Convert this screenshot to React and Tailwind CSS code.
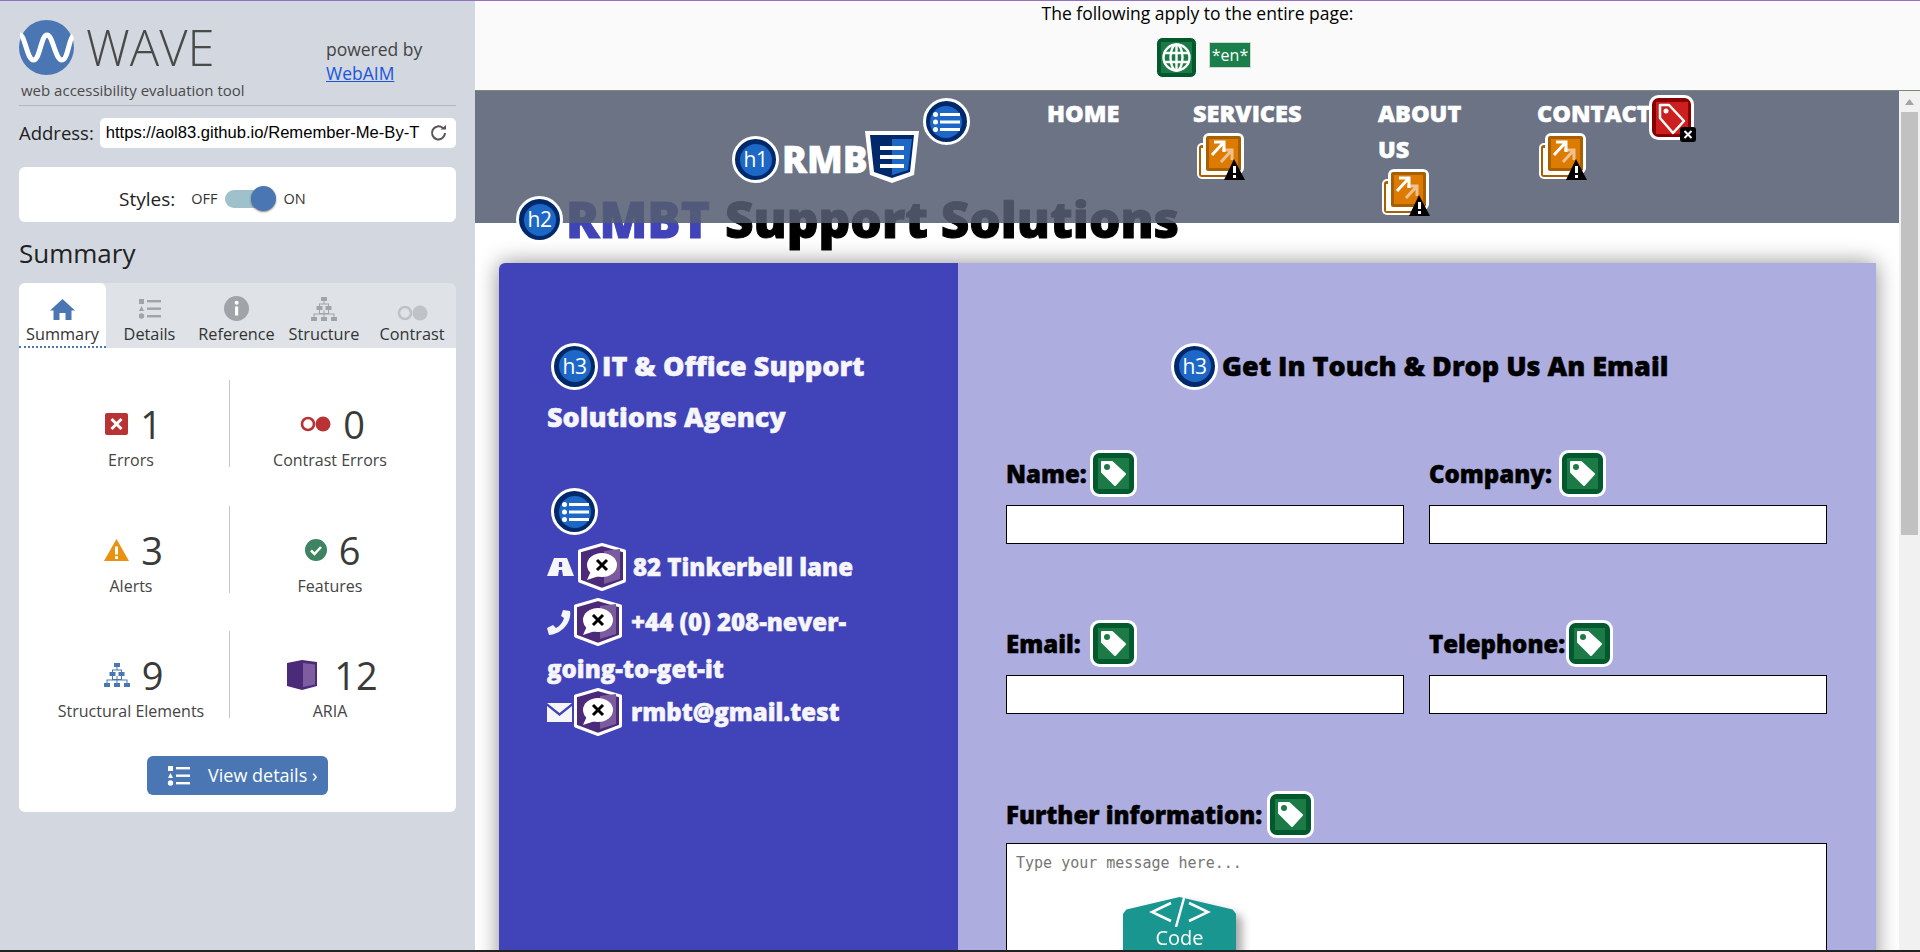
import React from "react";

const display = "font-['Open_Sans'] font-extrabold [-webkit-text-stroke:0.5px]";

const RoundIcon = ({ label }) => (
  <span className="relative z-20 flex h-[47px] w-[47px] shrink-0 items-center justify-center rounded-full border-[3px] border-white bg-[#00296b] [-webkit-text-stroke:0]">
    <span className="flex h-[32px] w-[32px] items-center justify-center rounded-full bg-[#1d68c6] font-['Open_Sans'] text-[21px] font-normal leading-none tracking-[-0.5px] text-white">
      {label || (
        <svg width="28" height="22" viewBox="0 0 28 22" fill="white">
          <circle cx="3.5" cy="3.5" r="2.5" />
          <circle cx="3.5" cy="11" r="2.5" />
          <circle cx="3.5" cy="18.5" r="2.5" />
          <rect x="8" y="2" width="20" height="3" />
          <rect x="8" y="9.5" width="20" height="3" />
          <rect x="8" y="17" width="20" height="3" />
        </svg>
      )}
    </span>
  </span>
);

const TagIcon = () => (
  <svg width="47" height="47" viewBox="0 0 47 47" className="shrink-0">
    <rect x="1.5" y="1.5" width="44" height="44" rx="8" fill="#03592e" stroke="white" strokeWidth="3" />
    <rect x="8" y="8" width="31" height="31" fill="#1c7a47" />
    <path d="M12 12H22L35 24L25 35L12 22Z" fill="white" stroke="white" strokeWidth="2" strokeLinejoin="round" />
    <circle cx="17" cy="17" r="3" fill="#1c7a47" />
  </svg>
);

const BrokenLabel = () => (
  <svg width="47" height="47" viewBox="0 0 47 47" className="shrink-0">
    <rect x="1.5" y="1.5" width="42" height="42" rx="8" fill="#8a0000" stroke="white" strokeWidth="3" />
    <rect x="7" y="7" width="32" height="32" fill="#cc2020" />
    <path d="M11 10H20L35 26L24 38L11 23Z" fill="none" stroke="white" strokeWidth="2.5" strokeLinejoin="round" />
    <circle cx="17" cy="16" r="2.5" fill="white" />
    <rect x="31" y="32" width="16" height="15" rx="3" fill="black" />
    <path d="M35.5 36L42.5 43M42.5 36L35.5 43" stroke="white" strokeWidth="2" />
  </svg>
);

const ExternalIcon = () => (
  <svg width="49" height="49" viewBox="0 0 49 49" className="shrink-0">
    <rect x="1" y="11" width="38" height="36" rx="5" fill="white" />
    <rect x="3" y="13" width="34" height="32" rx="3" fill="#a85f00" />
    <rect x="5" y="16" width="30" height="27" fill="white" />
    <rect x="7" y="1" width="41" height="41" rx="6" fill="white" />
    <rect x="10" y="4" width="35" height="35" rx="2" fill="#a85f00" />
    <rect x="13" y="7" width="29" height="29" fill="#dd7a00" />
    <path d="M26 18L36 18L36 28M36 18L25 30" fill="none" stroke="#f0c090" strokeWidth="3" />
    <path d="M18 10L28 10L28 20M28 10L16 23" fill="none" stroke="white" strokeWidth="3" />
    <path d="M38 27L49 48H28Z" fill="black" />
    <rect x="37" y="34" width="3" height="7" fill="white" />
    <rect x="37" y="43" width="3" height="3" fill="white" />
  </svg>
);

const AriaIcon = () => (
  <svg width="48" height="48" viewBox="0 0 48 48" className="shrink-0">
    <path d="M24 1.5L46.5 8V38L24 46.5L1.5 38V8Z" fill="#4b2a7a" stroke="white" strokeWidth="3" strokeLinejoin="round" />
    <path d="M26 8L42 6V36L26 41Z" fill="#7a5c9e" />
    <ellipse cx="24" cy="22" rx="15" ry="12" fill="white" />
    <path d="M13 28L9 37L21 33Z" fill="white" />
    <path d="M19 17L29 27M29 17L19 27" stroke="black" strokeWidth="3" />
  </svg>
);

const GlobeIcon = () => (
  <svg width="41" height="41" viewBox="0 0 41 41">
    <rect x="0.5" y="0.5" width="40" height="40" rx="6" fill="#03592e" stroke="white" />
    <rect x="5" y="5" width="31" height="31" fill="#1c7a47" />
    <g fill="none" stroke="white" strokeWidth="2.4">
      <circle cx="20.5" cy="20.5" r="13" />
      <ellipse cx="20.5" cy="20.5" rx="6" ry="13" />
      <path d="M20.5 7V34M8 16H33M8 25H33" />
    </g>
  </svg>
);

const ListGlyph = ({ color, size = 24 }) => (
  <svg width={size} height={size} viewBox="0 0 24 24" fill={color}>
    <rect x="1" y="2" width="5" height="5" />
    <path d="M3.5 9L6 14H1Z" />
    <circle cx="3.5" cy="19" r="2.7" />
    <rect x="9" y="3" width="14" height="2.4" />
    <rect x="9" y="10.5" width="14" height="2.4" />
    <rect x="9" y="18" width="14" height="2.4" />
  </svg>
);

const TreeGlyph = ({ color, w = 26, h = 24 }) => (
  <svg width={w} height={h} viewBox="0 0 26 24" fill={color}>
    <rect x="10" y="0" width="6" height="4" />
    <rect x="5.5" y="9" width="6" height="4" />
    <rect x="14.5" y="9" width="6" height="4" />
    <rect x="0" y="20" width="6" height="4" />
    <rect x="10" y="20" width="6" height="4" />
    <rect x="20" y="20" width="6" height="4" />
    <path d="M12.5 4H13.5V6.5H18V9H17V7.5H9V9H8V6.5H12.5ZM8 13H9V16H12.5V13H13.5V16H17V13H18V16.5H23.5V20H22.5V17.5H13.5V20H12.5V17.5H3.5V20H2.5V16.5H8Z" />
  </svg>
);

const PairGlyph = ({ color }) => (
  <svg width="31" height="16" viewBox="0 0 31 16">
    <circle cx="8" cy="8" r="6" fill="none" stroke={color} strokeWidth="2.6" />
    <circle cx="23" cy="8" r="7.5" fill={color} />
  </svg>
);

const tabs = [
  {
    name: "Summary",
    w: "w-[87px]",
    icon: (
      <svg width="25" height="22" viewBox="0 0 25 22" fill="#4a77b4">
        <path d="M12.5 0L25 11.5H21.5V21H15.5V14H9.5V21H3.5V11.5H0Z" />
      </svg>
    ),
  },
  { name: "Details", w: "w-[87px]", icon: <ListGlyph color="#a0a4a8" /> },
  {
    name: "Reference",
    w: "w-[87px]",
    icon: (
      <svg width="25" height="25" viewBox="0 0 25 25">
        <circle cx="12.5" cy="12.5" r="12.5" fill="#a0a4a8" />
        <rect x="11" y="10.5" width="3.2" height="9" fill="white" />
        <circle cx="12.6" cy="6.8" r="2" fill="white" />
      </svg>
    ),
  },
  { name: "Structure", w: "w-[88px]", icon: <TreeGlyph color="#a0a4a8" /> },
  { name: "Contrast", w: "w-[88px]", icon: <PairGlyph color="#bfc2c6" /> },
];

const stats = [
  {
    n: "1",
    label: "Errors",
    icon: (
      <svg width="23" height="22" viewBox="0 0 23 22">
        <rect width="23" height="22" rx="2" fill="#b93334" />
        <path d="M6.5 6L16.5 16M16.5 6L6.5 16" stroke="white" strokeWidth="3" />
      </svg>
    ),
  },
  { n: "0", label: "Contrast Errors", icon: <PairGlyph color="#b93334" /> },
  {
    n: "3",
    label: "Alerts",
    icon: (
      <svg width="25" height="22" viewBox="0 0 25 22">
        <path d="M12.5 0L25 22H0Z" fill="#e8920f" />
        <rect x="11" y="7.5" width="3" height="8" fill="white" />
        <rect x="11" y="17" width="3" height="3" fill="white" />
      </svg>
    ),
  },
  {
    n: "6",
    label: "Features",
    icon: (
      <svg width="22" height="22" viewBox="0 0 22 22">
        <circle cx="11" cy="11" r="11" fill="#3e8463" />
        <path d="M6 11.5L9.5 15L16 8" fill="none" stroke="white" strokeWidth="2.5" />
      </svg>
    ),
  },
  { n: "9", label: "Structural Elements", icon: <TreeGlyph color="#4a77b4" /> },
  {
    n: "12",
    label: "ARIA",
    icon: (
      <svg width="30" height="30" viewBox="0 0 30 30" className="mr-[5px]">
        <path d="M0 3L15 0L30 2V26L15 30L0 26Z" fill="#4b2a7a" />
        <path d="M16 3L28 4.5V24.5L16 27Z" fill="#7d5ca0" />
      </svg>
    ),
  },
];

const navItems = [
  { label: ["HOME"], w: "w-[146px]" },
  { label: ["SERVICES"], w: "w-[185px]", ext: "ml-[3px]" },
  { label: ["ABOUT", "US"], w: "w-[159px]", ext: "ml-[3px]" },
  { label: ["CONTACT"], ext: "ml-[1px]", red: true },
];

const Sidebar = () => (
  <aside className="flex w-[475px] shrink-0 flex-col bg-[#d3d8e0] px-[19px] font-['Open_Sans']">
    <div className="flex h-[104px] items-start">
      <div className="w-[307px]">
        <div className="mt-[19px] flex items-center">
          <svg width="55" height="55" viewBox="0 0 55 55">
            <circle cx="27.5" cy="27.5" r="27.5" fill="#4a77b4" />
            <path d="M1 15C6 15 8 40 14.5 40C21 40 22 15 28 15C34 15 36 40 43 40C49 40 50 18 54 16" fill="none" stroke="white" strokeWidth="5" />
          </svg>
          <span className="ml-[12px] text-[49px] font-light leading-none text-[#4a4a4a]">WAVE</span>
        </div>
        <p className="ml-[2px] mt-[5px] text-[15px] leading-5 text-[#4a4a4a]">web accessibility evaluation tool</p>
      </div>
      <div className="mt-[36px] text-[17.5px] leading-6 text-[#444]">
        <p>powered by</p>
        <a className="text-[#1a56db] underline">WebAIM</a>
      </div>
    </div>
    <div className="h-px bg-[#b4b8bd]" />
    <div className="mt-[12px] flex items-center gap-[6px]">
      <span className="text-[18.5px] text-[#222]">Address:</span>
      <div className="flex h-[30px] flex-1 items-center justify-between rounded-[5px] bg-white pl-[6px] pr-[8px] font-['Liberation_Sans'] text-[16.6px] text-black">
        <span className="whitespace-nowrap">https://aol83.github.io/Remember-Me-By-T</span>
        <svg width="18" height="18" viewBox="0 0 18 18" fill="none" stroke="#555" strokeWidth="2">
          <path d="M15 9A6.5 6.5 0 1 1 12.8 4" />
          <path d="M10.5 5.5H16V1Z" fill="#555" stroke="none" />
        </svg>
      </div>
    </div>
    <div className="mt-[19px] flex h-[55px] items-center rounded-[6px] bg-white pl-[100px] pt-[9px]">
      <span className="text-[19px] text-[#222]">Styles:</span>
      <span className="ml-[16px] text-[14.5px] text-[#333]">OFF</span>
      <span className="relative ml-[8px] h-[18px] w-[47px] rounded-full bg-[#9fc1cb]">
        <span className="absolute right-[-4px] top-[-4px] h-[25px] w-[25px] rounded-full bg-[#4a77b4] shadow-[0_1px_2px_rgba(0,0,0,0.5)]" />
      </span>
      <span className="ml-[11px] text-[14.5px] text-[#333]">ON</span>
    </div>
    <h2 className="mt-[13px] text-[26px] font-normal leading-9 text-[#222]">Summary</h2>
    <div className="mt-[12px] flex h-[65px] rounded-t-[6px] bg-[#dfe3e8]">
      {tabs.map((t, i) => (
        <div
          key={t.name}
          className={`${t.w} flex flex-col items-center ${i === 0 ? "rounded-t-[6px] border-b-2 border-dotted border-[#4a77b4] bg-white" : ""}`}
        >
          <div className="flex h-[41px] items-end pb-[3px]">{t.icon}</div>
          <span className="text-[16.3px] leading-[20px] text-[#333]">{t.name}</span>
        </div>
      ))}
    </div>
    <div className="h-[464px] rounded-b-[6px] bg-white pt-[32px]">
      <div className="ml-[14px] grid grid-cols-[197px_200px] gap-y-[38.5px]">
        {stats.map((s, i) => (
          <div key={s.label} className={`flex h-[87px] flex-col items-center ${i % 2 === 0 ? "border-r border-[#c4c4c4]" : ""}`}>
            <div className="ml-[5px] flex h-[69px] shrink-0 items-center gap-[12px] pt-[19px]">
              {s.icon}
              <span className="text-[38px] leading-none text-[#3a3a3a]">{s.n}</span>
            </div>
            <span className="shrink-0 text-[16px] leading-[22px] text-[#444]">{s.label}</span>
          </div>
        ))}
      </div>
      <div className="mx-auto mt-[38px] flex h-[39px] w-[181px] items-center rounded-[6px] bg-[#4a77b4] pl-[20px] text-[18px] text-white">
        <ListGlyph color="white" />
        <span className="ml-[17px]">View details ›</span>
      </div>
    </div>
  </aside>
);

const Header = () => (
  <header className="relative z-10 flex h-[132px] bg-[#555e73]/87 text-white">
    <div className="ml-[257px] flex w-[315px] items-start">
      <div className="mt-[45px]"><RoundIcon label="h1" /></div>
      <span className={`${display} ml-[3px] mt-[45px] text-[37px] leading-[45px]`}>RMB</span>
      <svg width="54" height="52" viewBox="0 0 54 52" className="ml-[-3px] mt-[40px] shrink-0">
        <path d="M0 0H54L49 44L27 52L5 44Z" fill="white" />
        <path d="M5 4H49L45 41L27 47L9 41Z" fill="#00296b" />
        <path d="M27 8H47L43 39L27 44Z" fill="#1d68c6" />
        <path d="M15 15H39V19H15ZM15 24H39V28H15ZM15 33H39V37H15Z" fill="white" />
      </svg>
      <div className="ml-[4px] mt-[7px]"><RoundIcon /></div>
    </div>
    <nav className="flex items-start">
      {navItems.map(item => (
        <div key={item.label[0]} className={`${item.w || ""} flex items-start pt-[4px]`}>
          <div>
            {item.label.map(line => (
              <div key={line} className={`${display} text-[23.5px] leading-[36px]`}>{line}</div>
            ))}
            {item.ext && <div className={`${item.ext} mt-[1px]`}><ExternalIcon /></div>}
          </div>
          {item.red && <div className="ml-[-2px]"><BrokenLabel /></div>}
        </div>
      ))}
    </nav>
  </header>
);

const Field = ({ label, w }) => (
  <div>
    <label className={`${display} flex h-[47px] items-center gap-[4px] text-[24px] text-black`}>
      <span className={`${w} whitespace-nowrap`}>{label}</span>
      <TagIcon />
    </label>
    <input className="mt-[8px] block h-[39px] w-full border border-black bg-white" />
  </div>
);

const PhoneGlyph = () => (
  <svg width="25" height="25" viewBox="0 0 25 25" fill="#f5f5fa">
    <path d="M16 0L23 1C25 12 15 24 2 25L0 18L6 15L9 18C13 16 16 12 17 8L14 6Z" />
  </svg>
);

const Contact = () => (
  <div className="ml-[24px] mt-[20px] flex h-[800px] w-[1377px] rounded-t-[6px] shadow-[0_0_22px_rgba(0,0,0,0.45)]">
    <section className={`${display} w-[459px] shrink-0 rounded-tl-[6px] bg-[#4143b8] pl-[48px] pt-[79px] text-[#f5f5fa]`}>
      <div className="flex h-[48px] items-center text-[27px]">
        <span className="ml-[4px] mr-[4px]"><RoundIcon label="h3" /></span>
        IT &amp; Office Support
      </div>
      <div className="mt-[3px] flex h-[48px] items-center text-[27px]">Solutions Agency</div>
      <div className="ml-[4px] mt-[47px]"><RoundIcon /></div>
      <div className="mt-[8px] flex h-[48px] items-center text-[24px]">
        <svg width="27" height="18" viewBox="0 0 27 18" fill="#f5f5fa">
          <path d="M7 0H20L27 18H16L15 12H12L11 18H0ZM12 4L11.8 9H15.2L15 4Z" />
        </svg>
        <span className="ml-[4px] mr-[7px]"><AriaIcon /></span>
        82 Tinkerbell lane
      </div>
      <div className="mt-[7px] flex h-[48px] items-center text-[24px]">
        <PhoneGlyph />
        <span className="ml-[2px] mr-[9px]"><AriaIcon /></span>
        +44 (0) 208-never-
      </div>
      <div className="mt-[6px] flex h-[34px] items-center text-[24px]">going-to-get-it</div>
      <div className="mt-[2px] flex h-[48px] items-center text-[24px]">
        <svg width="25" height="19" viewBox="0 0 25 19" fill="#f5f5fa">
          <path d="M0 0H25L12.5 10ZM0 3L12.5 13L25 3V19H0Z" />
        </svg>
        <span className="ml-[2px] mr-[9px]"><AriaIcon /></span>
        rmbt@gmail.test
      </div>
    </section>
    <section className="flex-1 bg-[#adade0] pl-[48px] pt-[79px]">
      <div className={`${display} flex h-[48px] items-center text-[27px] text-black`}>
        <span className="ml-[165px] mr-[4px]"><RoundIcon label="h3" /></span>
        Get In Touch &amp; Drop Us An Email
      </div>
      <form className="w-[821px]">
        <div className="mt-[60px] grid grid-cols-2 gap-x-[25px] gap-y-[76px]">
          <Field label="Name:" w="w-[80px]" />
          <Field label="Company:" w="w-[126px]" />
          <Field label="Email:" w="w-[80px]" />
          <Field label="Telephone:" w="w-[133px]" />
        </div>
        <label className={`${display} mt-[77px] flex h-[47px] items-center gap-[5px] text-[24px] text-black`}>
          Further information:
          <TagIcon />
        </label>
        <div className="relative mt-[5px]">
          <textarea
            placeholder="Type your message here..."
            className="block h-[300px] w-full resize-none border border-black bg-white px-[9px] py-[7px] font-['DejaVu_Sans_Mono'] text-[15px] leading-[24px] placeholder:text-[#757575]"
          />
          <div className="absolute left-[117px] top-[50px] drop-shadow-[6px_6px_5px_rgba(0,0,0,0.35)]">
            <div className="h-[70px] w-[113px] bg-[#1a9690] text-center font-['Open_Sans'] text-white [clip-path:polygon(0_24%,3%_18%,50%_0,97%_18%,100%_24%,100%_100%,0_100%)]">
              <svg width="62" height="30" viewBox="0 0 62 30" className="mx-auto mt-[4px]" fill="none" stroke="white" strokeWidth="2.5">
                <path d="M22 6L3 15L22 24M40 6L59 15L40 24M35 1L27 30" />
              </svg>
              <div className="text-[20px] leading-[22px]">Code</div>
            </div>
          </div>
        </div>
      </form>
    </section>
  </div>
);

export default function App() {
  return (
    <div className="flex h-screen w-screen flex-col overflow-hidden bg-white">
      <div className="h-px shrink-0 bg-[#9370c4]" />
      <div className="flex min-h-0 flex-1">
        <Sidebar />
        <main className="flex min-w-0 flex-1 flex-col">
          <div className="h-[90px] shrink-0 border-b border-[#7a8a78] bg-[#fafafa] text-center font-['Open_Sans'] text-[17.5px] leading-[24px] text-black">
            <p>The following apply to the entire page:</p>
            <div className="ml-[12px] mt-[12px] flex items-start justify-center gap-[12px]">
              <GlobeIcon />
              <span className="mt-[5px] flex h-[26px] w-[42px] items-center justify-center border border-[#d0d8d0] bg-[#1a7f4b] text-[16px] text-white">*en*</span>
            </div>
          </div>
          <div className="flex min-h-0 flex-1">
            <div className="min-w-0 flex-1 overflow-hidden">
              <Header />
              <h2 className={`${display} mt-[-27px] flex h-[47px] items-center pl-[41px] text-[49.5px] text-black [-webkit-text-stroke:1px]`}>
                <RoundIcon label="h2" />
                <span className="ml-[3px] text-[#4143b8]">RMBT</span>
                <span className="ml-[15px]">Support Solutions</span>
              </h2>
              <Contact />
            </div>
            <div className="flex w-[21px] shrink-0 flex-col items-center bg-[#f1f1f1]">
              <svg width="9" height="6" viewBox="0 0 9 6" className="mt-[8px]" fill="#a3a3a3"><path d="M4.5 0L9 6H0Z" /></svg>
              <div className="mt-[7px] h-[423px] w-[17px] bg-[#c1c1c1]" />
            </div>
          </div>
        </main>
      </div>
      <div className="h-[2px] shrink-0 bg-[#222]" />
    </div>
  );
}
